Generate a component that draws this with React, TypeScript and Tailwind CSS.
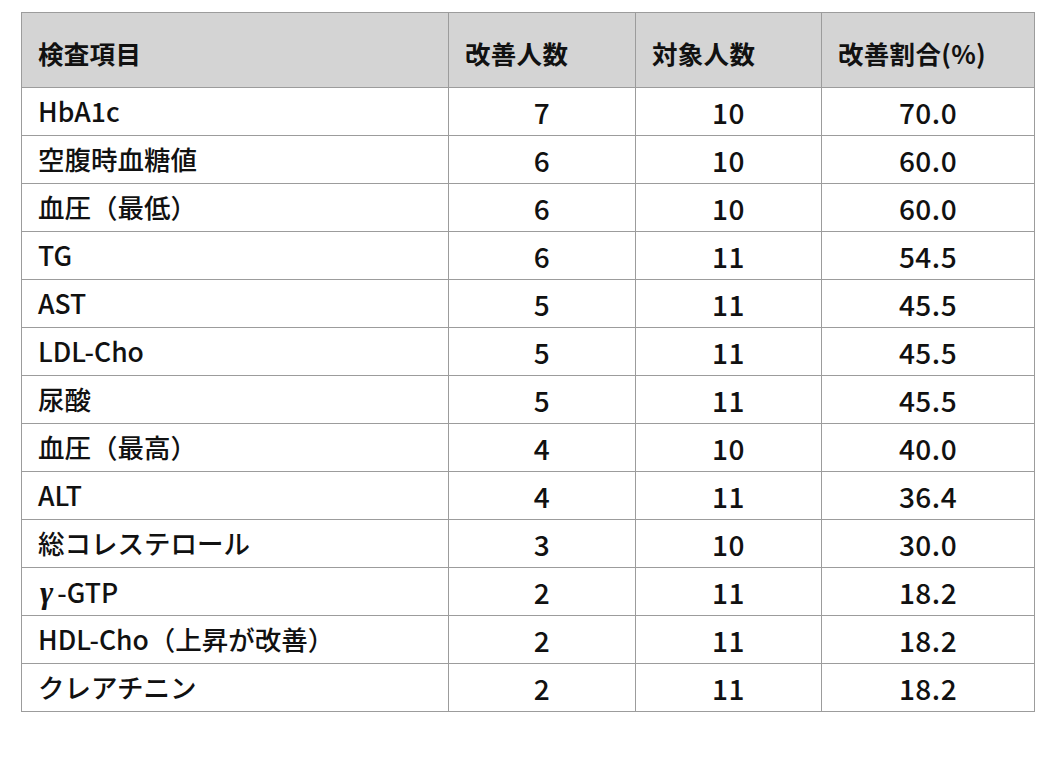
import React from "react";

const rows: [string, string, string, string][] = [
  ["HbA1c", "7", "10", "70.0"],
  ["空腹時血糖値", "6", "10", "60.0"],
  ["血圧（最低）", "6", "10", "60.0"],
  ["TG", "6", "11", "54.5"],
  ["AST", "5", "11", "45.5"],
  ["LDL-Cho", "5", "11", "45.5"],
  ["尿酸", "5", "11", "45.5"],
  ["血圧（最高）", "4", "10", "40.0"],
  ["ALT", "4", "11", "36.4"],
  ["総コレステロール", "3", "10", "30.0"],
  ["γ-GTP", "2", "11", "18.2"],
  ["HDL-Cho（上昇が改善）", "2", "11", "18.2"],
  ["クレアチニン", "2", "11", "18.2"],
];

export default function App() {
  return (
    <div
      className="w-[1054px] h-[758px] bg-white pt-[12px] pl-[21px]"
      style={{ fontFamily: '"Noto Sans CJK JP", "Noto Sans", sans-serif' }}
    >
      <table className="border-collapse text-[26.5px] text-[#111] font-medium leading-none">
        <colgroup>
          <col className="w-[427px]" />
          <col className="w-[187px]" />
          <col className="w-[186px]" />
          <col className="w-[213px]" />
        </colgroup>
        <thead>
          <tr className="h-[75px] bg-[#d4d4d4]">
            {["検査項目", "改善人数", "対象人数", "改善割合(%)"].map((h) => (
              <th
                key={h}
                className="border border-[#9c9c9c] pl-[16px] pt-[5px] text-left font-bold text-[25.5px] tracking-[0.3px]"
              >
                {h}
              </th>
            ))}
          </tr>
        </thead>
        <tbody>
          {rows.map((r, i) => (
            <tr key={i} className="h-[48px]">
              <td className="border border-[#9c9c9c] pl-[16px] text-left">
                {r[0].startsWith("γ") ? (
                  <>
                    <span
                      className="italic font-bold text-[32px] mr-[4px] ml-[2px]"
                      style={{ fontFamily: '"Liberation Serif", serif' }}
                    >
                      γ
                    </span>
                    {r[0].slice(1)}
                  </>
                ) : (
                  r[0]
                )}
              </td>
              <td className="border border-[#9c9c9c] text-center text-[28px] tracking-[0.5px]">{r[1]}</td>
              <td className="border border-[#9c9c9c] text-center text-[28px] tracking-[0.5px]">{r[2]}</td>
              <td className="border border-[#9c9c9c] text-center text-[28px] tracking-[0.5px]">{r[3]}</td>
            </tr>
          ))}
        </tbody>
      </table>
    </div>
  );
}
